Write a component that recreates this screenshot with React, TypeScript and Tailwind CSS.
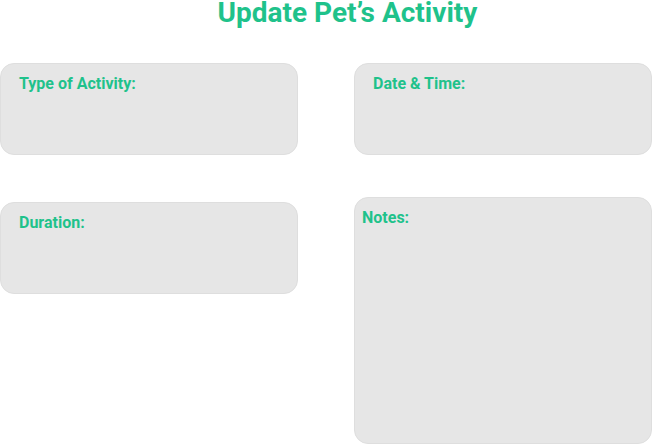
export default function App() {
    return (
        <div className="w-[652px] h-[444px] overflow-hidden bg-white font-['Roboto',sans-serif]">
            <div className="h-[63px]">
                <h1 className="pl-[43px] text-center text-[28px] leading-[26px] font-bold text-[#1fc28b]">
                    Update Pet’s Activity
                </h1>
            </div>

            <div className="flex gap-[56px]">
                <div className="flex flex-col gap-[47px] w-[298px]">
                    <div className="h-[92px] rounded-[14px] bg-[#e6e6e6] border border-[#dedede] pt-[10px] pl-[18px]">
                        <h2 className="text-[16px] leading-[19px] font-bold text-[#1fc28b]">Type of Activity:</h2>
                    </div>
                    <div className="h-[92px] rounded-[14px] bg-[#e6e6e6] border border-[#dedede] pt-[10px] pl-[18px]">
                        <h2 className="text-[16px] leading-[19px] font-bold text-[#1fc28b]">Duration:</h2>
                    </div>
                </div>

                <div className="flex flex-col gap-[42px] w-[298px]">
                    <div className="h-[92px] rounded-[14px] bg-[#e6e6e6] border border-[#dedede] pt-[10px] pl-[18px]">
                        <h2 className="text-[16px] leading-[19px] font-bold text-[#1fc28b]">Date &amp; Time:</h2>
                    </div>
                    <div className="h-[247px] rounded-[14px] bg-[#e6e6e6] border border-[#dedede] pt-[10px] pl-[7px]">
                        <h2 className="text-[16px] leading-[19px] font-bold text-[#1fc28b]">Notes:</h2>
                    </div>
                </div>
            </div>
        </div>
    );
}
